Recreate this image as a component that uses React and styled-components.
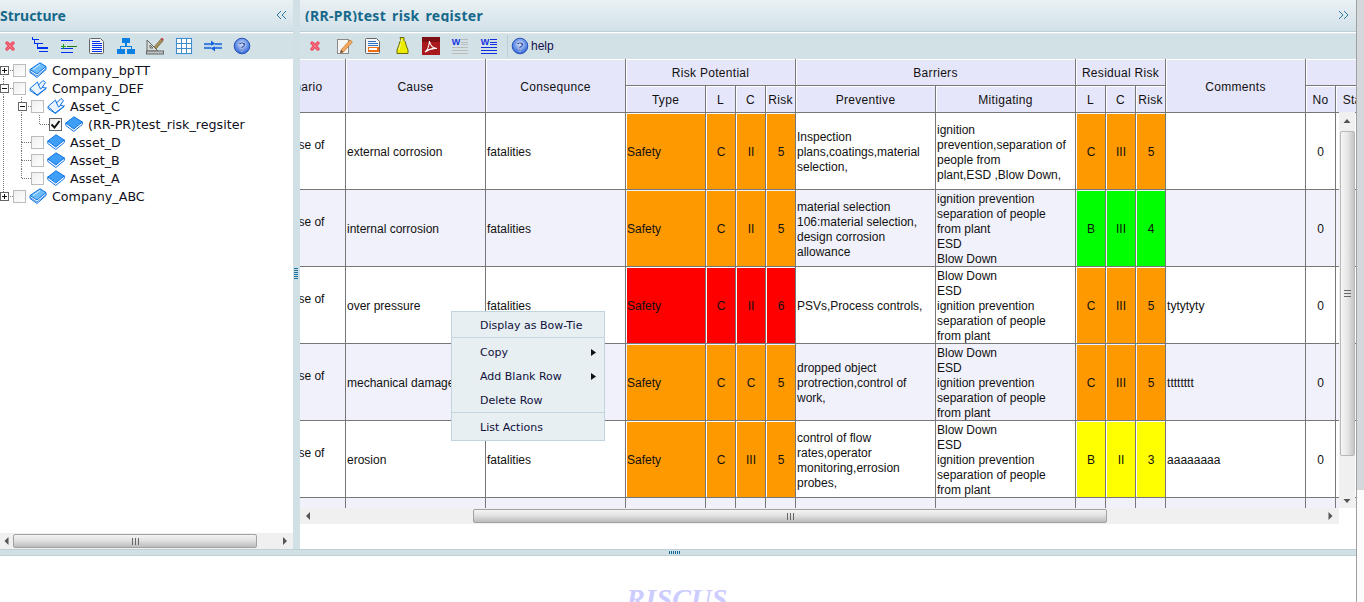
import React from "react";
import styled, { createGlobalStyle, css } from "styled-components";

const GlobalStyle = createGlobalStyle`
  html, body {
    margin: 0;
    padding: 0;
    height: 100%;
    overflow: hidden;
    background: #fff;
  }
  body {
    font-family: "Liberation Sans", Arial, sans-serif;
    font-size: 12px;
    color: #111;
  }
`;

const Screen = styled.div`
  display: flex;
  width: 1364px;
  height: 602px;
  overflow: hidden;
`;

const Page = styled.div`
  position: relative;
  width: 1356px;
  display: flex;
  flex-direction: column;
`;

const WindowBar = styled.div`
  width: 8px;
  border-left: 1px solid #a0a0a0;
  box-sizing: border-box;
  background: linear-gradient(to bottom, #d4d8da 0, #d4d8da 490px, #fbfbfb 490px);
`;

const Layout = styled.div`
  display: flex;
  height: 549px;
`;

const Side = styled.div`
  width: 293px;
  display: flex;
  flex-direction: column;
`;

const Main = styled.div`
  width: 1056px;
  display: flex;
  flex-direction: column;
`;

const Splitter = styled.div`
  width: 7px;
  display: flex;
  align-items: center;
  justify-content: center;
  background: #d0e0e4;
`;

const GripV = styled.span`
  width: 4px;
  height: 12px;
  margin-left: -1px;
  margin-top: -1px;
  background: repeating-linear-gradient(to bottom, #1a6f9c 0 1px, transparent 1px 2px);
`;

const PanelHeader = styled.div`
  height: 32px;
  display: flex;
  align-items: flex-start;
  justify-content: space-between;
  padding: 0 6px 0 ${(p) => p.$inset}px;
  box-sizing: border-box;
  background: linear-gradient(to bottom, #eaf1f4, #d2e1e7);
  border-bottom: 1px solid #bdd0d6;
  margin-bottom: 1px;
`;

const Title = styled.div`
  margin-top: 7px;
  height: 15px;
  line-height: 18px;
  overflow: hidden;
  font-family: "Noto Sans", Tahoma, sans-serif;
  font-size: 14px;
  font-weight: 700;
  letter-spacing: ${(p) => (p.$wide ? "0.3px" : "0")};
  color: #16688a;
  white-space: nowrap;
`;

const Chevrons = styled.svg`
  margin-top: 9px;
  width: 12px;
  height: 12px;
  fill: none;
  stroke: #2a7ba6;
  stroke-width: 1;
`;

const Toolbar = styled.div`
  height: 26px;
  display: flex;
  align-items: center;
  gap: 11px;
  padding: 0 0 2px ${(p) => p.$inset}px;
  background: #d2e1e6;
  border-top: 1px solid #dde9ec;
  box-sizing: border-box;
`;

const ToolIcon = styled.svg`
  width: 18px;
  height: 18px;
  flex: none;
`;

const ToolSep = styled.span`
  width: 1px;
  height: 22px;
  margin-left: -2px;
  margin-right: -8px;
  background: #bccdd3;
`;

const HelpLabel = styled.span`
  margin-left: -9px;
  font-size: 12px;
  color: #10104a;
`;

const TreePane = styled.div`
  flex: 1;
  padding-top: 2px;
  background: #fff;
  font-family: "DejaVu Sans", Verdana, sans-serif;
  font-size: 12.7px;
  color: #101020;
`;

const TreeRow = styled.div`
  display: flex;
  align-items: center;
  height: 18px;
`;

const dotsV = "repeating-linear-gradient(to bottom, #777 0 1px, transparent 1px 2px)";
const dotsH = "repeating-linear-gradient(to right, #777 0 1px, transparent 1px 2px)";

const Indent = styled.span`
  width: 18px;
  height: 18px;
  flex: none;
  background: ${(p) => (p.$line ? `${dotsV} 3px 0 / 1px 18px no-repeat` : "none")};
`;

const Joint = styled.span`
  width: 13px;
  height: 18px;
  flex: none;
  display: flex;
  align-items: center;
  ${(p) => css`
    background:
      ${p.$up ? `${dotsV} 3px 0 / 1px 9px no-repeat,` : ""}
      ${p.$down ? `${dotsV} 3px 9px / 1px 9px no-repeat,` : ""}
      ${dotsH} 4px 9px / 9px 1px no-repeat;
  `}
`;

const Toggle = styled.span`
  width: 7px;
  height: 7px;
  border: 1px solid #666;
  background:
    linear-gradient(#111, #111) center / 5px 1px no-repeat,
    ${(p) => (p.$open ? "" : "linear-gradient(#111, #111) center / 1px 5px no-repeat,")}
    #fff;
`;

const CheckBox = styled.span`
  width: 11px;
  height: 11px;
  flex: none;
  margin-right: 3px;
  display: flex;
  border: 1px solid ${(p) => (p.$checked ? "#666" : "#bcbcbc")};
  background: linear-gradient(135deg, #eeeeee, #fff);
`;

const TreeIconBox = styled.svg`
  width: 18px;
  height: 16px;
  flex: none;
  margin-right: 5px;
`;

const TreeLabel = styled.span`
  white-space: nowrap;
`;

const ScrollTrack = styled.div`
  height: 16px;
  display: flex;
  align-items: center;
  background: #f0f0f0;
`;

const ArrowSlot = styled.svg`
  width: ${(p) => p.$w}px;
  height: 16px;
  flex: none;
  fill: #555;
`;

const HThumb = styled.div`
  width: ${(p) => p.$w}px;
  height: 14px;
  margin-left: ${(p) => p.$gap || 0}px;
  flex: none;
  box-sizing: border-box;
  display: flex;
  align-items: center;
  justify-content: center;
  border: 1px solid #a2a2a2;
  border-radius: 2px;
  background: linear-gradient(to bottom, #f4f4f4, #e2e2e2 45%, #bcbcbc);
`;

const GripBars = styled.span`
  width: 7px;
  height: 7px;
  background: repeating-linear-gradient(to right, #666 0 1px, transparent 1px 3px);
`;

const Filler = styled.div`
  flex: 1;
`;

const GridArea = styled.div`
  position: relative;
  height: 449px;
  overflow: hidden;
  background: #fff;
`;

const Table = styled.table`
  table-layout: fixed;
  width: 1180px;
  margin-left: -94px;
  border-collapse: separate;
  border-spacing: 0;
  font-size: 12px;
  line-height: 15px;
`;

const Head = styled.th`
  height: 27px;
  padding: ${(p) => (p.rowSpan > 1 ? "4px" : "2px")} 0 0;
  box-sizing: border-box;
  font-weight: 400;
  letter-spacing: 0.3px;
  text-align: center;
  background: #e6e6fa;
  box-shadow: inset 1px 1px 0 #fff;
  border-right: 1px solid #777;
  border-bottom: 1px solid #777;
  white-space: nowrap;
  overflow: hidden;
`;

const tones = {
  orange: "#ff9900",
  red: "#ff0000",
  green: "#00ff00",
  yellow: "#ffff00",
};

const Cell = styled.td`
  height: 77px;
  box-sizing: border-box;
  padding: ${(p) => (p.$tone ? "1px 0 0 1px" : "1px 1px 0 1px")};
  border-right: 1px solid #777;
  border-bottom: 1px solid #777;
  background-clip: content-box;
  background-color: ${(p) => (p.$tone ? tones[p.$tone] : "transparent")};
  text-align: ${(p) => (p.$center ? "center" : "left")};
  white-space: pre-line;
  vertical-align: middle;
`;

const CellText = styled.div`
  transform: translateY(1px);
`;

const Row = styled.tr`
  background: ${(p) => (p.$even ? "#f1f1fb" : "#fff")};
`;

const VScroll = styled.div`
  position: absolute;
  right: 1px;
  top: 53px;
  bottom: 0;
  width: 16px;
  display: flex;
  flex-direction: column;
  align-items: center;
  background: #f0f0f0;
`;

const VThumb = styled.div`
  width: 15px;
  height: 325px;
  margin-top: 3px;
  box-sizing: border-box;
  display: flex;
  align-items: center;
  justify-content: center;
  border: 1px solid #b8b8b8;
  border-radius: 2px;
  background: linear-gradient(to right, #f6f6f6, #e6e6e6 50%, #c4c4c4);
`;

const GripBarsV = styled.span`
  width: 7px;
  height: 7px;
  background: repeating-linear-gradient(to bottom, #666 0 1px, transparent 1px 3px);
`;

const ArrowV = styled.svg`
  width: 16px;
  height: 16px;
  flex: none;
  fill: #555;
`;

const GridFoot = styled.div`
  width: 1039px;
`;

const BlankFoot = styled.div`
  flex: 1;
  background: #fff;
`;

const BottomBar = styled.div`
  height: 7px;
  box-sizing: border-box;
  display: flex;
  align-items: center;
  justify-content: center;
  background: #d0e0e4;
  border-top: 1px solid #bdd0d6;
  border-bottom: 1px solid #bdd0d6;
`;

const GripH = styled.span`
  width: 12px;
  height: 3px;
  margin-left: -6px;
  background: repeating-linear-gradient(to right, #0f6c9c 0 1px, transparent 1px 2px);
`;

const Footer = styled.div`
  flex: 1;
  padding-top: 27px;
  padding-right: 2px;
  text-align: center;
  font-family: "Liberation Serif", "Times New Roman", serif;
  font-size: 28px;
  font-style: italic;
  font-weight: 700;
  line-height: 32px;
  letter-spacing: 0.3px;
  color: #ccccff;
  overflow: hidden;
`;

const Menu = styled.div`
  position: absolute;
  left: 451px;
  top: 311px;
  width: 154px;
  box-sizing: border-box;
  padding: 1px 0;
  background: #e7eff3;
  border: 1px solid #c2d5df;
  font-family: "DejaVu Sans", Tahoma, sans-serif;
  font-size: 11px;
  color: #10103a;
`;

const MenuItem = styled.div`
  height: 24px;
  display: flex;
  align-items: center;
  justify-content: space-between;
  padding: 0 8px 0 28px;
`;

const MenuLine = styled.div`
  height: 1px;
  margin-bottom: 2px;
  background: #c4d6df;
`;

const MenuArrow = styled.svg`
  width: 5px;
  height: 7px;
  fill: #111;
`;

const Cross = () => (
  <ToolIcon viewBox="0 0 18 18">
    <path d="M6 6l6 6M12 6l-6 6" stroke="#ee4f63" strokeWidth="3.4" strokeLinecap="round" />
    <path d="M6 6l6 6M12 6l-6 6" stroke="#f68a94" strokeWidth="0.8" />
  </ToolIcon>
);

const StairLines = () => (
  <ToolIcon viewBox="0 0 18 18" shapeRendering="crispEdges" fill="#0030f0">
    <rect x="2" y="0" width="1" height="3" />
    <rect x="2" y="2" width="7" height="1" />
    <rect x="4" y="3" width="1" height="4" />
    <rect x="4" y="6" width="9" height="1" />
    <rect x="7" y="7" width="1" height="4" />
    <rect x="7" y="10" width="11" height="2" />
    <rect x="9" y="14" width="9" height="1" />
  </ToolIcon>
);

const PlusLines = () => (
  <ToolIcon viewBox="0 0 18 18" shapeRendering="crispEdges">
    <rect x="2" y="3" width="12" height="1" fill="#0030f0" />
    <rect x="2" y="11" width="12" height="1" fill="#0030f0" />
    <rect x="2" y="15" width="12" height="1" fill="#0030f0" />
    <rect x="8" y="9" width="10" height="1" fill="#1f7a1f" />
    <rect x="2" y="9" width="5" height="1" fill="#1f9a1f" />
    <rect x="4" y="7" width="1" height="5" fill="#1f9a1f" />
  </ToolIcon>
);

const PageLines = () => (
  <ToolIcon viewBox="0 0 18 18">
    <path d="M2.5 1.5h10l3 3v11q0 1-1 1h-12q-1 0-1-1v-13q0-1 1-1z" fill="#f4f4f4" stroke="#666" />
    <path d="M4 4h8M4 6h10M4 8h10M4 10h10M4 12h10M4 14h10" stroke="#0030f0" shapeRendering="crispEdges" />
  </ToolIcon>
);

const OrgChart = () => (
  <ToolIcon viewBox="0 0 18 18" shapeRendering="crispEdges" fill="#0b7fe2">
    <rect x="5" y="1" width="8" height="5" />
    <rect x="8" y="6" width="2" height="3" />
    <rect x="3" y="9" width="12" height="1" />
    <rect x="3" y="9" width="1" height="3" />
    <rect x="14" y="9" width="1" height="3" />
    <rect x="0" y="12" width="8" height="5" />
    <rect x="10" y="12" width="8" height="5" />
  </ToolIcon>
);

const SetSquare = () => (
  <ToolIcon viewBox="0 0 18 18">
    <path d="M1 14V3l11 11z" fill="#d8dcdc" stroke="#666" />
    <path d="M4 11V8l3 3z" fill="#d2e1e6" stroke="#666" />
    <rect x="0.5" y="14" width="17" height="3" fill="#bcc2c2" stroke="#666" />
    <path d="M8 10l7-8 2 2-7 8z" fill="#a5905a" stroke="#6b5a30" strokeWidth="0.6" />
    <path d="M14.5 1.5l2.5 2.5 .8-1.6-1.7-1.7z" fill="#c2404a" />
  </ToolIcon>
);

const GridIcon = () => (
  <ToolIcon viewBox="0 0 18 18" shapeRendering="crispEdges">
    <rect x="0" y="0" width="18" height="18" fill="#c6dcf6" />
    <rect x="1.5" y="1.5" width="15" height="15" fill="#fff" stroke="#3f8fc6" />
    <path d="M6.5 1v16M11.5 1v16M1 6.5h16M1 11.5h16" stroke="#3f8fc6" />
  </ToolIcon>
);

const Converge = () => (
  <ToolIcon viewBox="0 0 18 18">
    <path d="M0 9h18" stroke="#9cc4ea" strokeWidth="0.8" />
    <path d="M0 7h8M18 11h-8" stroke="#1060e0" strokeWidth="1.4" fill="none" />
    <path d="M7 3.5l4.5 3.5-4.5 1.5zM11 14.5l-4.5-3.5 4.5-1.5z" fill="#1060e0" />
    <path d="M11 7h7M0 11h7" stroke="#1060e0" strokeWidth="1.4" />
  </ToolIcon>
);

const HelpIcon = () => (
  <ToolIcon viewBox="0 0 18 18">
    <defs>
      <radialGradient id="helpfill" cx="0.5" cy="0.4" r="0.6">
        <stop offset="0" stopColor="#cfe0fb" />
        <stop offset="1" stopColor="#2c62d8" />
      </radialGradient>
    </defs>
    <circle cx="9" cy="9" r="7.8" fill="url(#helpfill)" stroke="#2a55b8" />
    <text x="9" y="13.5" textAnchor="middle" fontSize="13" fontWeight="700" fontFamily="Liberation Sans" fill="#123c9c" stroke="#fff" strokeWidth="0.3">?</text>
  </ToolIcon>
);

const EditNote = () => (
  <ToolIcon viewBox="0 0 18 18">
    <rect x="2.5" y="2.5" width="11" height="14" fill="#f6f6f4" stroke="#8a8a8a" />
    <path d="M6 13l9-10 2.4 2-9 10-3 1z" fill="#f4a860" stroke="#c07020" strokeWidth="0.7" />
    <path d="M6 13l-.7 3 3-1z" fill="#555" />
  </ToolIcon>
);

const PageForm = () => (
  <ToolIcon viewBox="0 0 18 18">
    <path d="M2.5 1.5h10l3 3v11q0 1-1 1h-12q-1 0-1-1v-13q0-1 1-1z" fill="#f6f6f6" stroke="#666" />
    <path d="M4 4h8M4 6h10M4 8h10" stroke="#2a70c0" shapeRendering="crispEdges" />
    <rect x="4.5" y="10.5" width="9.5" height="3.5" fill="#fff" stroke="#ef6c10" strokeWidth="1.4" shapeRendering="crispEdges" />
  </ToolIcon>
);

const WeightIcon = () => (
  <ToolIcon viewBox="0 0 18 18">
    <path d="M7 .5h4v3l1.500 1.500.5 3 2 5v3.500h-11v-3.500l2-5 .5-3 1.500-1.500z" fill="#ecec00" stroke="#6a6a10" />
    <path d="M8.500 2v3M7.500 7l-1.500 6" stroke="#fbfb90" fill="none" />
  </ToolIcon>
);

const PdfIcon = () => (
  <ToolIcon viewBox="0 0 18 18">
    <rect width="18" height="18" fill="#a81a1e" />
    <rect y="0" width="18" height="5" fill="#7c1014" />
    <path d="M3 15c3-2 4-6 4.5-11 .6 4 3 7 7.5 7.5-4-.5-8 .5-12 3.5z" fill="none" stroke="#fff" strokeWidth="1.1" />
  </ToolIcon>
);

const WordLines = ({ tone }) => (
  <ToolIcon viewBox="0 0 18 18">
    <text x="5" y="8" textAnchor="middle" fontSize="9" fontWeight="700" fontFamily="Liberation Sans" fill="#1030e0">W</text>
    <path d="M10 2.5h7M10 5.5h7M10 7.5h7M1 10.5h16M1 13.5h16M1 16.5h16" stroke={tone} shapeRendering="crispEdges" />
  </ToolIcon>
);

const BookClosed = () => (
  <TreeIconBox viewBox="0 0 18 16">
    <path d="M1 7.5v3l7 5 9-8v-3z" fill="#fff" stroke="#0f72e0" />
    <path d="M1 9.5l7 4.5 9-7.5" stroke="#0f72e0" fill="none" strokeWidth="0.8" />
    <path d="M1 7.5L11 .8l6 3.7-9 7.5z" fill="#6dbdfb" stroke="#0f72e0" />
    <path d="M4 7.5l7-5" stroke="#d6ecff" fill="none" />
  </TreeIconBox>
);

const BookOpen = () => (
  <TreeIconBox viewBox="0 0 18 16">
    <path d="M1 8.5L8.5 2l1 3 4.5-4.5 2.5 2-3 4.5 3.5 1.5-9 6.5z" fill="#eaf5ff" stroke="#0f72e0" />
    <path d="M9.5 5l2 4 2.500-2" stroke="#0f72e0" fill="none" />
    <path d="M1 8.500v2l7.500 5 8.500-7v-1.500" stroke="#0f72e0" fill="none" />
  </TreeIconBox>
);

const LeafIcon = () => (
  <TreeIconBox viewBox="0 0 18 16">
    <path d="M.8 7v2.500l8 6 8.500-7V6z" fill="#fff" stroke="#0f72e0" />
    <path d="M.8 7L9 .8 17.300 6l-8.500 7z" fill="#3f9ff8" stroke="#0f72e0" />
  </TreeIconBox>
);

const treeIcons = { closed: BookClosed, open: BookOpen, leaf: LeafIcon };

const treeRows = [
  { label: "Company_bpTT", icon: "closed", indents: [], down: true, toggle: "plus" },
  { label: "Company_DEF", icon: "open", indents: [], up: true, down: true, toggle: "minus" },
  { label: "Asset_C", icon: "open", indents: [true], up: true, down: true, toggle: "minus" },
  { label: "(RR-PR)test_risk_regsiter", icon: "leaf", indents: [true, true], up: true, checked: true },
  { label: "Asset_D", icon: "leaf", indents: [true], up: true, down: true },
  { label: "Asset_B", icon: "leaf", indents: [true], up: true, down: true },
  { label: "Asset_A", icon: "leaf", indents: [true], up: true },
  { label: "Company_ABC", icon: "closed", indents: [], up: true, toggle: "plus" },
];

const columns = [140, 140, 140, 80, 30, 30, 30, 140, 140, 30, 30, 30, 140, 30, 50];

const mitigate = "Blow Down\nESD\nignition prevention\nseparation of people\nfrom plant";

const riskRows = [
  {
    cause: "external corrosion",
    type: "orange", l: "C", c: "II", r: "5",
    prev: "Inspection\nplans,coatings,material\nselection,",
    mit: "ignition\nprevention,separation of\npeople from\nplant,ESD ,Blow Down,",
    tone: "orange", rl: "C", rc: "III", rr: "5", note: "",
  },
  {
    cause: "internal corrosion",
    type: "orange", l: "C", c: "II", r: "5",
    prev: "material selection\n106:material selection,\ndesign corrosion\nallowance",
    mit: "ignition prevention\nseparation of people\nfrom plant\nESD\nBlow Down",
    tone: "green", rl: "B", rc: "III", rr: "4", note: "",
  },
  {
    cause: "over pressure",
    type: "red", l: "C", c: "II", r: "6",
    prev: "PSVs,Process controls,",
    mit: mitigate,
    tone: "orange", rl: "C", rc: "III", rr: "5", note: "tytytyty",
  },
  {
    cause: "mechanical damage",
    type: "orange", l: "C", c: "C", r: "5",
    prev: "dropped object\nprotrection,control of\nwork,",
    mit: mitigate,
    tone: "orange", rl: "C", rc: "III", rr: "5", note: "tttttttt",
  },
  {
    cause: "erosion",
    type: "orange", l: "C", c: "III", r: "5",
    prev: "control of flow\nrates,operator\nmonitoring,errosion\nprobes,",
    mit: mitigate,
    tone: "yellow", rl: "B", rc: "II", rr: "3", note: "aaaaaaaa",
  },
];

const Hor = ({ dir, w }) => (
  <ArrowSlot $w={w} viewBox={`0 0 ${w} 16`}>
    {dir === "left" ? (
      <path d={`M${w / 2 + 2} 4v8l-4-4z`} />
    ) : (
      <path d={`M${w / 2 - 2} 4v8l4-4z`} />
    )}
  </ArrowSlot>
);

const Data = ({ tone, center, children }) => (
  <Cell $tone={tone} $center={center}>
    <CellText>{children}</CellText>
  </Cell>
);

const App = () => {
  return (
    <Screen>
      <GlobalStyle />
      <Page>
        <Layout>
          <Side>
            <PanelHeader $inset={0}>
              <Title>Structure</Title>
              <Chevrons viewBox="0 0 12 12">
                <path d="M6 2L2 6l4 4M11 2L7 6l4 4" />
              </Chevrons>
            </PanelHeader>
            <Toolbar $inset={1}>
              <Cross />
              <StairLines />
              <PlusLines />
              <PageLines />
              <OrgChart />
              <SetSquare />
              <GridIcon />
              <Converge />
              <HelpIcon />
            </Toolbar>
            <TreePane>
              {treeRows.map((row) => {
                const Icon = treeIcons[row.icon];
                return (
                  <TreeRow key={row.label}>
                    {row.indents.map((line, i) => (
                      <Indent key={i} $line={line} />
                    ))}
                    <Joint $up={row.up} $down={row.down}>
                      {row.toggle && <Toggle $open={row.toggle === "minus"} />}
                    </Joint>
                    <CheckBox $checked={row.checked}>
                      {row.checked && (
                        <svg viewBox="0 0 11 11" width="11" height="11">
                          <path d="M1.5 5.5l3 3 5-6.5" fill="none" stroke="#111" strokeWidth="2" />
                        </svg>
                      )}
                    </CheckBox>
                    <Icon />
                    <TreeLabel>{row.label}</TreeLabel>
                  </TreeRow>
                );
              })}
            </TreePane>
            <ScrollTrack>
              <Hor dir="left" w={13} />
              <HThumb $w={244}>
                <GripBars />
              </HThumb>
              <Filler />
              <Hor dir="right" w={16} />
            </ScrollTrack>
          </Side>
          <Splitter>
            <GripV />
          </Splitter>
          <Main>
            <PanelHeader $inset={5}>
              <Title $wide>(RR-PR)test_risk_register</Title>
              <Chevrons viewBox="0 0 12 12">
                <path d="M1 2l4 4-4 4M6 2l4 4-4 4" />
              </Chevrons>
            </PanelHeader>
            <Toolbar $inset={6}>
              <Cross />
              <EditNote />
              <PageForm />
              <WeightIcon />
              <PdfIcon />
              <WordLines tone="#bbbbbb" />
              <WordLines tone="#1030e0" />
              <ToolSep />
              <HelpIcon />
              <HelpLabel>help</HelpLabel>
            </Toolbar>
            <GridArea>
              <Table>
                <colgroup>
                  {columns.map((w, i) => (
                    <col key={i} style={{ width: w }} />
                  ))}
                </colgroup>
                <thead>
                  <tr>
                    <Head rowSpan={2}>Hazard Scenario</Head>
                    <Head rowSpan={2}>Cause</Head>
                    <Head rowSpan={2}>Consequnce</Head>
                    <Head colSpan={4}>Risk Potential</Head>
                    <Head colSpan={2}>Barriers</Head>
                    <Head colSpan={3}>Residual Risk</Head>
                    <Head rowSpan={2}>Comments</Head>
                    <Head colSpan={2} />
                  </tr>
                  <tr>
                    <Head>Type</Head>
                    <Head>L</Head>
                    <Head>C</Head>
                    <Head>Risk</Head>
                    <Head>Preventive</Head>
                    <Head>Mitigating</Head>
                    <Head>L</Head>
                    <Head>C</Head>
                    <Head>Risk</Head>
                    <Head>No</Head>
                    <Head>Status</Head>
                  </tr>
                </thead>
                <tbody>
                  {riskRows.map((row, i) => (
                    <Row key={row.cause} $even={i % 2 === 1}>
                      <Data>{"Unintended release of\nhydrocarbons"}</Data>
                      <Data>{row.cause}</Data>
                      <Data>fatalities</Data>
                      <Data tone={row.type}>Safety</Data>
                      <Data tone={row.type} center>{row.l}</Data>
                      <Data tone={row.type} center>{row.c}</Data>
                      <Data tone={row.type} center>{row.r}</Data>
                      <Data>{row.prev}</Data>
                      <Data>{row.mit}</Data>
                      <Data tone={row.tone} center>{row.rl}</Data>
                      <Data tone={row.tone} center>{row.rc}</Data>
                      <Data tone={row.tone} center>{row.rr}</Data>
                      <Data>{row.note}</Data>
                      <Data center>0</Data>
                      <Data />
                    </Row>
                  ))}
                  <Row $even>
                    {columns.map((_, i) => (
                      <Cell key={i} />
                    ))}
                  </Row>
                </tbody>
              </Table>
              <VScroll>
                <ArrowV viewBox="0 0 16 16">
                  <path d="M8 7l-3.500 4h7z" />
                </ArrowV>
                <VThumb>
                  <GripBarsV />
                </VThumb>
                <Filler />
                <ArrowV viewBox="0 0 16 16">
                  <path d="M8 11l-3.500-4h7z" />
                </ArrowV>
              </VScroll>
            </GridArea>
            <GridFoot>
              <ScrollTrack>
                <Hor dir="left" w={16} />
                <HThumb $w={634} $gap={157}>
                  <GripBars />
                </HThumb>
                <Filler />
                <Hor dir="right" w={17} />
              </ScrollTrack>
            </GridFoot>
            <BlankFoot />
          </Main>
        </Layout>
        <BottomBar>
          <GripH />
        </BottomBar>
        <Footer>RISCUS</Footer>
        <Menu>
          <MenuItem>Display as Bow-Tie</MenuItem>
          <MenuLine />
          <MenuItem>
            Copy
            <MenuArrow viewBox="0 0 5 7"><path d="M0 0l5 3.500L0 7z" /></MenuArrow>
          </MenuItem>
          <MenuItem>
            Add Blank Row
            <MenuArrow viewBox="0 0 5 7"><path d="M0 0l5 3.500L0 7z" /></MenuArrow>
          </MenuItem>
          <MenuItem>Delete Row</MenuItem>
          <MenuLine />
          <MenuItem>List Actions</MenuItem>
        </Menu>
      </Page>
      <WindowBar />
    </Screen>
  );
};

export default App;
